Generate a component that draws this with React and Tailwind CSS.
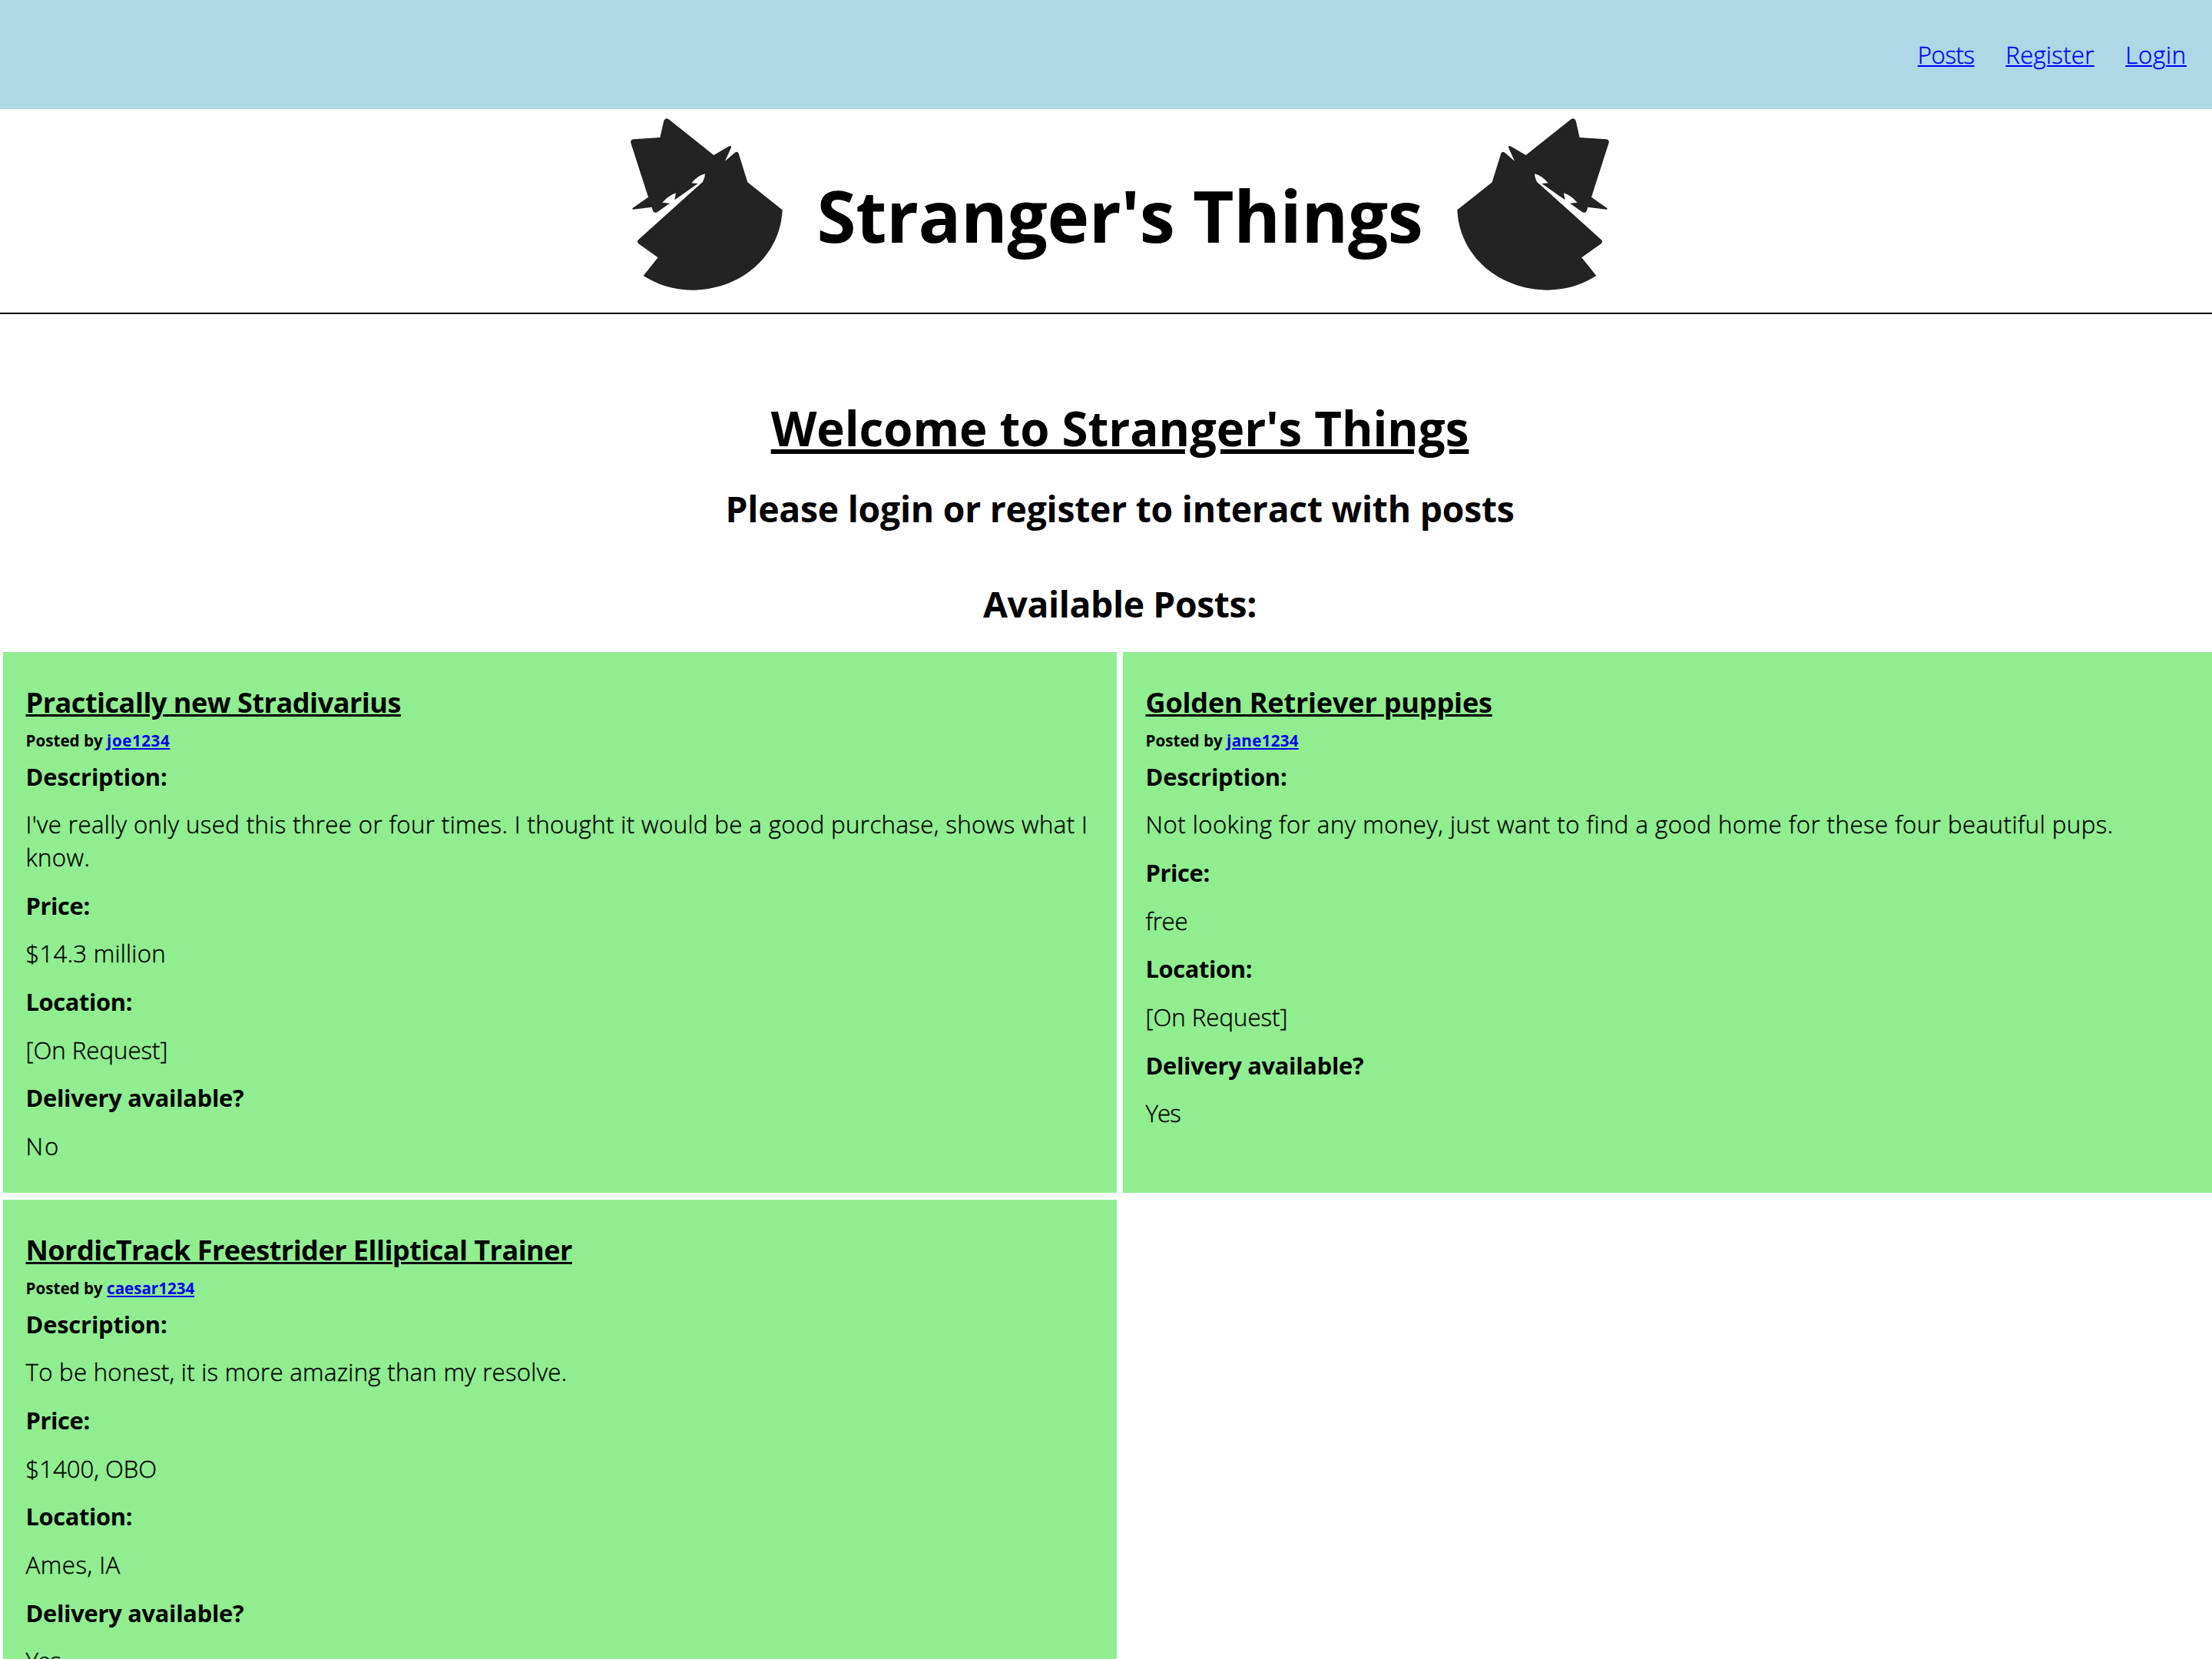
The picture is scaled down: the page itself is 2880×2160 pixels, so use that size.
import React from "react";

const posts = [
  {
    title: "Practically new Stradivarius", titleClass: "tracking-[-0.5px]",
    author: "joe1234", authorClass: "tracking-[0.5px]",
    description: "I've really only used this three or four times. I thought it would be a good purchase, shows what I know.",
    descriptionClass: "tracking-[0.39px]",
    price: "$14.3 million", priceClass: "tracking-[0.24px]",
    location: "[On Request]", locationClass: "tracking-normal",
    delivery: "No", deliveryClass: "tracking-[2px]",
  },
  {
    title: "Golden Retriever puppies", titleClass: "tracking-[-0.21px]",
    author: "jane1234", authorClass: "tracking-[0.23px]",
    description: "Not looking for any money, just want to find a good home for these four beautiful pups.",
    descriptionClass: "tracking-[0.48px]",
    price: "free", priceClass: "tracking-[-0.2px]",
    location: "[On Request]", locationClass: "tracking-normal",
    delivery: "Yes", deliveryClass: "tracking-[-0.9px]",
  },
  {
    title: "NordicTrack Freestrider Elliptical Trainer", titleClass: "tracking-[-0.55px]",
    author: "caesar1234", authorClass: "tracking-[-0.08px]",
    description: "To be honest, it is more amazing than my resolve.",
    descriptionClass: "tracking-[0.27px]",
    price: "$1400, OBO", priceClass: "tracking-[-0.06px]",
    location: "Ames, IA", locationClass: "tracking-[0.5px]",
    delivery: "Yes", deliveryClass: "tracking-[-0.9px]",
  },
];

const links = [
  { label: "Posts", className: "tracking-[-0.41px]" },
  { label: "Register", className: "tracking-[0.28px]" },
  { label: "Login", className: "tracking-[0.75px]" },
];

function StrangerLogo({ className = "" }) {
  return (
    <svg className={`h-[228px] w-[200px] shrink-0 ${className}`} viewBox="60 66 600 684" fill="#232323">
      <path d="M193 82Q199 68 212 76L388 216L448 181Q457 177 456 186L432 239L472 205Q481 200 485 209L520 322L656 430C648 608 496 743 300 743C231 741 171 724 113 687L170 616L94 562Q86 554 94 546L345 320Q354 303 354 289Q326 295 301 325L326 327L235 391L240 364Q211 373 187 401L216 404L168 438Q154 445 150 433L146 419L73 428Q67 426 72 422L132 380L64 168Q61 155 76 154L178 147Z" />
    </svg>
  );
}

function Field({ label, labelClass, value, valueClass }) {
  return (
    <>
      <h4 className={`mb-5 text-[30.9px] font-bold ${labelClass}`}>{label}</h4>
      <p className={`mb-5 text-[31.2px] font-light [-webkit-text-stroke:0.4px] last:mb-0 ${valueClass}`}>{value}</p>
    </>
  );
}

function PostCard({ post }) {
  return (
    <article className="flex flex-col border-t border-[#e6fbe6]">
      <div className="grow border-4 border-white bg-[#90ee90] pt-[40.1px] pr-[28px] pl-[29.5px] leading-[42.67px]">
        <h3 className={`text-[36.1px] leading-[50px] font-bold underline decoration-[3px] underline-offset-[2px] ${post.titleClass}`}>{post.title}</h3>
        <h6 className="mt-[11px] mb-[11.5px] text-[20.7px] leading-[28px] font-bold">
          <span className="tracking-[-0.04px]">Posted by </span>
          <a href="#" className={`text-[#0000ee] underline decoration-[2px] underline-offset-[2px] ${post.authorClass}`}>{post.author}</a>
        </h6>
        <Field label="Description:" labelClass="tracking-[-0.2px]" value={post.description} valueClass={post.descriptionClass} />
        <Field label="Price:" labelClass="tracking-[-0.42px]" value={post.price} valueClass={post.priceClass} />
        <Field label="Location:" labelClass="tracking-[-0.4px]" value={post.location} valueClass={post.locationClass} />
        <Field label="Delivery available?" labelClass="tracking-[-0.31px]" value={post.delivery} valueClass={post.deliveryClass} />
      </div>
    </article>
  );
}

export default function App() {
  return (
    <div className="h-[2160px] w-full overflow-hidden bg-white font-['Open_Sans',sans-serif] text-black">
      <nav className="flex h-[141.6px] items-center justify-end gap-[40.6px] bg-[#add8e6] pt-[2px] pr-[33px] text-[31.2px] leading-[42.67px] font-light">
        {links.map((link) => (
          <a key={link.label} href="#" className={`text-[#0000ff] underline decoration-[2px] underline-offset-[2px] [-webkit-text-stroke:0.4px] ${link.className}`}>{link.label}</a>
        ))}
      </nav>
      <div className="w-[2916px]">
        <header className="flex h-[267.4px] justify-center border-b-2 border-black pt-[10.4px]">
          <StrangerLogo />
          <h1 className="mt-[64.5px] w-[876px] text-center text-[92.6px] leading-[128px] font-bold tracking-[-0.4px]">Stranger's Things</h1>
          <StrangerLogo className="-scale-x-100" />
        </header>
        <main>
          <h1 className="mt-[106px] text-center text-[61.8px] leading-[85px] font-bold tracking-[-0.07px] underline decoration-[6px] underline-offset-[4px]">Welcome to Stranger's Things</h1>
          <h2 className="mt-[31px] text-center text-[46.3px] leading-[64px] font-bold tracking-[-0.24px]">Please login or register to interact with posts</h2>
          <h2 className="mt-[60px] text-center text-[46.3px] leading-[64px] font-bold tracking-[-0.4px]">Available Posts:</h2>
          <section className="mt-[25px] grid auto-rows-[713px] grid-cols-2">
            {posts.map((post) => <PostCard key={post.title} post={post} />)}
          </section>
        </main>
      </div>
    </div>
  );
}
